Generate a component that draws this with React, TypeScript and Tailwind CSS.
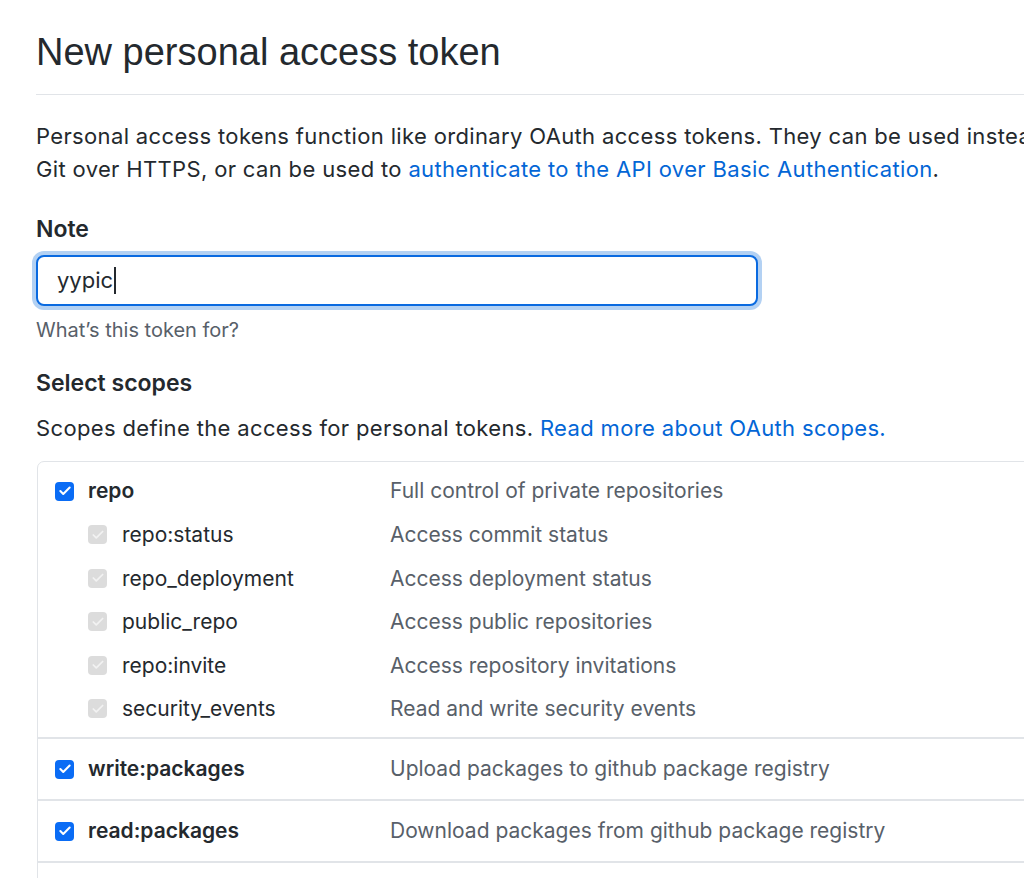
import { Check } from 'lucide-react';

type Scope = {
  name: string;
  desc: string;
  children?: { name: string; desc: string }[];
};

const scopes: Scope[] = [
  {
    name: 'repo',
    desc: 'Full control of private repositories',
    children: [
      { name: 'repo:status', desc: 'Access commit status' },
      { name: 'repo_deployment', desc: 'Access deployment status' },
      { name: 'public_repo', desc: 'Access public repositories' },
      { name: 'repo:invite', desc: 'Access repository invitations' },
      { name: 'security_events', desc: 'Read and write security events' },
    ],
  },
  { name: 'write:packages', desc: 'Upload packages to github package registry' },
  { name: 'read:packages', desc: 'Download packages from github package registry' },
];

const Box = ({ disabled }: { disabled?: boolean }) =>
  disabled ? (
    <span className="flex h-[19px] w-[19px] shrink-0 items-center justify-center rounded-[4px] bg-[#dcdcdc]">
      <Check size={14} strokeWidth={3} className="text-[#f2f2f2]" />
    </span>
  ) : (
    <span className="flex h-[19px] w-[19px] shrink-0 items-center justify-center rounded-[4px] bg-[#0a6cf5]">
      <Check size={14} strokeWidth={3.5} className="text-white" />
    </span>
  );

const App = () => {
  return (
    <div className="h-[878px] w-[1024px] overflow-hidden bg-white font-['Inter','Liberation_Sans',sans-serif] text-[#24292e]">
      <div className="w-[1100px] pl-[36px]">
        <div className="flex h-[95px] items-center border-b border-[#e1e4e8] pt-[10px]">
          <h1 className="font-['Liberation_Sans',Arial,sans-serif] text-[38px] leading-none font-normal">
            New personal access token
          </h1>
        </div>

        <p className="mt-[25px] text-[22px] leading-[33px] tracking-[0.35px] whitespace-nowrap">
          Personal access tokens function like ordinary OAuth access tokens. They can be used instead of a password for
          <br />
          Git over HTTPS, or can be used to{' '}
          <a className="text-[#0366d6]">authenticate to the API over Basic Authentication</a>.
        </p>

        <div className="mt-[28px] text-[23px] leading-[30px] font-semibold">Note</div>
        <div className="mt-[11px] flex h-[51px] w-[722px] items-center rounded-[8px] border-2 border-[#0a6ae0] bg-white pl-[19px] text-[22px] shadow-[0_0_0_4px_rgba(3,102,214,0.3)]">
          yypic<span className="ml-[1px] h-[27px] w-[1.5px] bg-[#24292e]" />
        </div>
        <div className="mt-[13px] text-[20px] leading-[22px] text-[#586069]">What’s this token for?</div>

        <div className="mt-[27px] text-[23px] leading-[30px] font-semibold">Select scopes</div>
        <p className="mt-[15px] text-[22px] leading-[30px] tracking-[0.35px]">
          Scopes define the access for personal tokens.{' '}
          <a className="text-[#0366d6]">Read more about OAuth scopes.</a>
        </p>

        <div className="mt-[18px] ml-[1px] rounded-[7px] border border-[#e1e4e8] text-[21px]">
          {scopes.map((s, i) => (
            <div key={s.name} className={i > 0 ? 'border-t-2 border-[#e1e4e8]' : ''}>
              <div
                className={`flex items-center pl-[17px] ${s.children ? 'h-[49px] pt-[9px]' : 'h-[60px] pt-[1px]'}`}
              >
                <Box />
                <span className="ml-[14px] w-[302px] font-semibold">{s.name}</span>
                <span className="text-[#586069]">{s.desc}</span>
              </div>
              {s.children && (
                <div className="pt-[2px] pb-[6px]">
                  {s.children.map((c) => (
                    <div key={c.name} className="flex h-[43.5px] items-center pl-[50px]">
                      <Box disabled />
                      <span className="ml-[15px] w-[268px]">{c.name}</span>
                      <span className="text-[#586069]">{c.desc}</span>
                    </div>
                  ))}
                </div>
              )}
            </div>
          ))}
          <div className="h-[40px] border-t-2 border-[#e1e4e8]" />
        </div>
      </div>
    </div>
  );
};

export default App;
